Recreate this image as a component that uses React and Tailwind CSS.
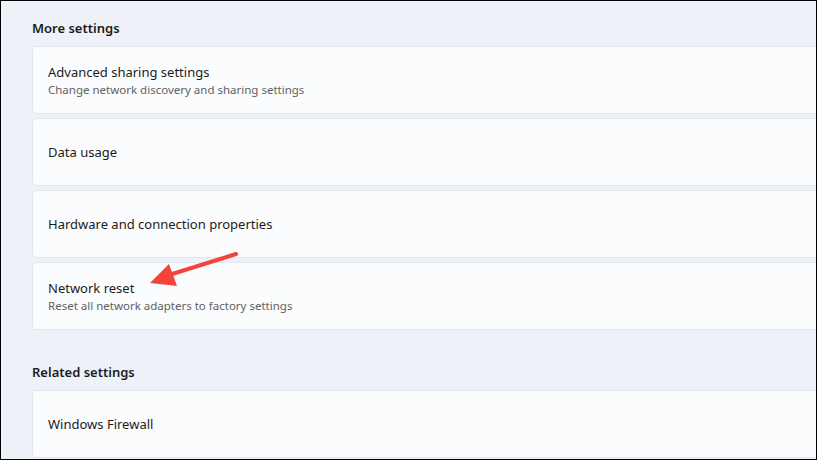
export default function App() {
  const more = [
    { title: "Advanced sharing settings", sub: "Change network discovery and sharing settings" },
    { title: "Data usage" },
    { title: "Hardware and connection properties" },
    { title: "Network reset", sub: "Reset all network adapters to factory settings" },
  ];

  const Card = ({ title, sub }) => (
    <div className="h-[68px] mr-[-20px] rounded-[4px] border border-[#e3e6eb] bg-[#fbfcfe] pl-[15px] flex flex-col justify-center">
      <div className="text-[13px] leading-[18px] text-[#1b1b1b]">{title}</div>
      {sub && <div className="text-[11.5px] leading-[16px] text-[#616161] mt-[1px]">{sub}</div>}
    </div>
  );

  return (
    <div
      className="relative w-[817px] h-[460px] overflow-hidden border border-black bg-[#eef2f8]"
      style={{ fontFamily: '"Noto Sans", "Open Sans", sans-serif' }}
    >
      <div className="pl-[31px]">
        <div className="pt-[18px] h-[45px] text-[13px] font-semibold text-[#1b1b1b]">More settings</div>
        <div className="flex flex-col gap-[4px]">
          {more.map((m) => (
            <Card key={m.title} {...m} />
          ))}
        </div>
        <div className="pt-[33px] h-[59px] text-[13px] font-semibold text-[#1b1b1b]">Related settings</div>
        <div className="pt-[1px]">
          <Card title="Windows Firewall" />
        </div>
      </div>

      {/* red annotation arrow */}
      <svg className="absolute left-0 top-0" width="817" height="460">
        <line x1="235" y1="253" x2="168" y2="274" stroke="#f2443a" strokeWidth="4" strokeLinecap="round" />
        <polygon points="149,282 168,263 176,285" fill="#f2443a" />
      </svg>
    </div>
  );
}
